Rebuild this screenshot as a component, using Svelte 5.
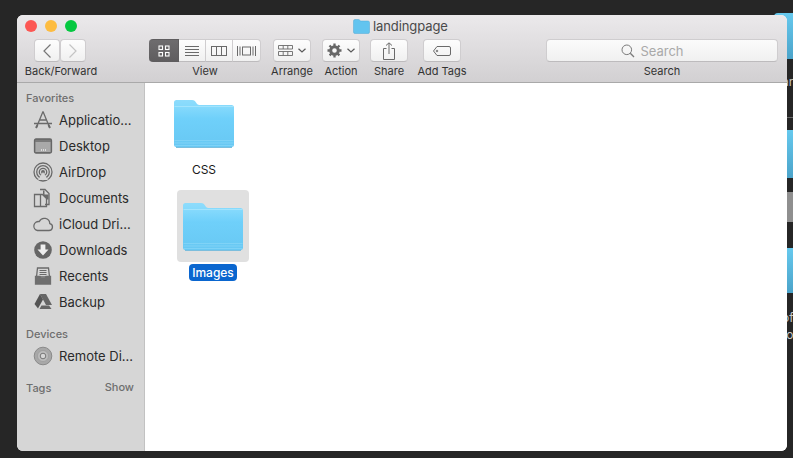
<script>
  const favorites = [
    { name: 'Applicatio...', icon: 'apps' },
    { name: 'Desktop', icon: 'desktop' },
    { name: 'AirDrop', icon: 'airdrop' },
    { name: 'Documents', icon: 'docs' },
    { name: 'iCloud Dri...', icon: 'cloud' },
    { name: 'Downloads', icon: 'down' },
    { name: 'Recents', icon: 'recents' },
    { name: 'Backup', icon: 'backup' }
  ];
</script>

{#snippet folder(id)}
  <svg class="folder" width="62" height="50" viewBox="0 0 62 50">
    <defs>
      <linearGradient id={id} x1="0" y1="0" x2="0" y2="1">
        <stop offset="0" stop-color="#8edcfc" />
        <stop offset="0.16" stop-color="#84d9fc" />
        <stop offset="0.4" stop-color="#6fd0fa" />
        <stop offset="1" stop-color="#68c8f3" />
      </linearGradient>
    </defs>
    <path d="M1 3.500a2.500 2.500 0 0 1 2.500-2.500h15.500c2.500 0 3 1 4 2.500s1.500 2.500 3.500 2.500h32a2.500 2.500 0 0 1 2.500 2.500v37a2.500 2.500 0 0 1-2.500 2.500h-55a2.500 2.500 0 0 1-2.500-2.500z" fill="url(#{id})" />
    <path d="M1.500 7.500h59" stroke="#a3e4fd" stroke-width="1" />
    <path d="M1.500 41.500h59M1.500 44h59M1.500 46.500h59" stroke="#85d6f8" stroke-width="0.800" />
    <path d="M3 48.500h56" stroke="#7cbedd" stroke-width="1" />
  </svg>
{/snippet}

{#snippet sideIcon(kind)}
  <svg class="sicon" width="22" height="22" viewBox="0 0 22 22" fill="none" stroke="#6a6a6a" stroke-width="1.300">
    {#if kind === 'apps'}
      <path d="M11 2.500 5 17M11 2.500 17 17M2 14.500h18M8 11h6" />
      <path d="M4 19l1.500-3M18 19l-1.500-3" stroke-width="2" />
    {:else if kind === 'desktop'}
      <rect x="2.500" y="4" width="17" height="14" rx="1.500" fill="#7a7a7a" stroke="#666" />
      <rect x="3.500" y="7" width="15" height="10" fill="#a9a9a9" stroke="none" />
      <path d="M9 15h5" stroke="#eee" stroke-dasharray="1 1" />
    {:else if kind === 'airdrop'}
      <circle cx="11" cy="11" r="9" />
      <circle cx="11" cy="11" r="6.300" />
      <circle cx="11" cy="11" r="3.700" />
      <circle cx="11" cy="11" r="1.300" fill="#6a6a6a" />
      <path d="M6 19l5-8 5 8z" fill="#d6d6d6" stroke="none" />
    {:else if kind === 'docs'}
      <path d="M8 2.500h5l4 4v11h-4" />
      <path d="M2.500 7.500h6v12h-6zM8.500 7.500h2l4 4v8h-6z" />
      <path d="M11 3.500h1.500v4h4v5h-1.500l-4-5z" fill="#6a6a6a" stroke="none" />
    {:else if kind === 'cloud'}
      <path d="M5.500 17.500h11.500a3.500 3.500 0 0 0 .8-6.900 5.500 5.500 0 0 0-10.500-2 4.500 4.500 0 0 0-1.800 8.900z" />
    {:else if kind === 'down'}
      <circle cx="11" cy="11" r="8.800" fill="#666" stroke="none" />
      <path d="M8.600 5.500h4.800v5h3.100L11 16.500 5.500 10.500h3.100z" fill="#eee" stroke="none" />
    {:else if kind === 'recents'}
      <path d="M5.500 3h11l1 9h-13z" fill="#d6d6d6" />
      <path d="M7.500 5.500h7M7.500 7.500h7M7.500 9.500h7" stroke-width="1" />
      <path d="M3.500 11.500h4.500l1 2h4l1-2h4.500v7.500h-15z" fill="#6f6f6f" stroke="#6f6f6f" />
    {:else if kind === 'backup'}
      <path d="M8 3h6l6 11h-6z" fill="#666" stroke="none" />
      <path d="M8 3l3 5.500L6 17.500l-3.500-4.500z" fill="#555" stroke="none" />
      <path d="M7.500 18h12l-2.500-3.500H9.500z" fill="#666" stroke="none" />
    {:else if kind === 'disc'}
      <circle cx="11" cy="11" r="8.800" fill="#a8a8a8" stroke="#8a8a8a" stroke-width="1" />
      <circle cx="11" cy="11" r="5.500" fill="#bcbcbc" stroke="#999" stroke-width="0.700" />
      <circle cx="11" cy="11" r="2.800" fill="#d6d6d6" stroke="#777" stroke-width="1" />
    {/if}
  </svg>
{/snippet}

<div class="desktop">
  <div class="bg-folder f1"></div>
  <div class="bg-text t1">ar</div>
  <div class="bg-line"></div>
  <div class="bg-folder f2"></div>
  <div class="bg-band"></div>
  <div class="bg-folder f3"></div>
  <div class="bg-text t2">of</div>
  <div class="bg-text t3">ro</div>

  <div class="window">
    <header class="toolbar">
      <div class="title">
        <svg width="17" height="15" viewBox="0 0 17 15">
          <path d="M0.500 2a1.500 1.500 0 0 1 1.500-1.500h3.500c1 0 1.500 1.500 2.500 1.500h7a1.500 1.500 0 0 1 1.500 1.500v9.500a1.500 1.500 0 0 1-1.500 1.500h-13a1.500 1.500 0 0 1-1.500-1.500z" fill="#62c4ef" stroke="#4ea9d6" stroke-width="0.500" />
        </svg>
        <span>landingpage</span>
      </div>
      <div class="lights">
        <span class="light red"></span>
        <span class="light yellow"></span>
        <span class="light green"></span>
      </div>
      <div class="tools">
        <div class="tool c-nav">
          <div class="seg nav">
            <button class="btn w26" aria-label="Back">
              <svg width="12" height="16" viewBox="0 0 12 16" fill="none" stroke="#777" stroke-width="1.200"><path d="M9.500 1.500 3 8l6.500 6.500" /></svg>
            </button>
            <button class="btn w26" aria-label="Forward">
              <svg width="12" height="16" viewBox="0 0 12 16" fill="none" stroke="#c4c4c4" stroke-width="1.200"><path d="M2.500 1.500 9 8l-6.500 6.500" /></svg>
            </button>
          </div>
          <span class="label">Back/Forward</span>
        </div>
        <div class="tool c-view">
          <div class="seg joined">
            <button class="btn vw active" aria-label="Icons">
              <svg width="12" height="12" viewBox="0 0 12 12" fill="none" stroke="#fff" stroke-width="1.100"><rect x="1" y="1" width="3.500" height="3.500" /><rect x="7.500" y="1" width="3.500" height="3.500" /><rect x="1" y="7.500" width="3.500" height="3.500" /><rect x="7.500" y="7.500" width="3.500" height="3.500" /></svg>
            </button>
            <button class="btn vw" aria-label="List">
              <svg width="16" height="12" viewBox="0 0 16 12" stroke="#6a6a6a" stroke-width="1"><path d="M1 1.500h14M1 4.500h14M1 7.500h14M1 10.500h14" /></svg>
            </button>
            <button class="btn vw" aria-label="Columns">
              <svg width="16" height="12" viewBox="0 0 16 12" fill="none" stroke="#6a6a6a" stroke-width="1"><rect x="0.500" y="1.500" width="15" height="9" /><path d="M5.500 1.500v9M10.500 1.500v9" /></svg>
            </button>
            <button class="btn vw" aria-label="Cover flow">
              <svg width="19" height="12" viewBox="0 0 19 12" fill="none" stroke="#6a6a6a" stroke-width="1"><rect x="5.500" y="2" width="8" height="8" /><path d="M0.500 1v10M3 1.500v9M16 1.500v9M18.500 1v10" /></svg>
            </button>
          </div>
          <span class="label">View</span>
        </div>
        <div class="tool c-arrange">
          <button class="btn w38" aria-label="Arrange">
            <svg width="15" height="11" viewBox="0 0 15 11" fill="none" stroke="#6a6a6a" stroke-width="0.900"><path d="M0.500 0.500h14v3.500h-14zM0.500 6.500h14v4h-14zM5.200 0.500v3.500M9.800 0.500v3.500M5.200 6.500v4M9.800 6.500v4" /></svg>
            <svg width="8" height="5" viewBox="0 0 8 5" fill="none" stroke="#5a5a5a" stroke-width="1.200"><path d="M0.500 0.700 4 4l3.500-3.300" /></svg>
          </button>
          <span class="label">Arrange</span>
        </div>
        <div class="tool c-action">
          <button class="btn w38" aria-label="Action">
            <svg width="15" height="15" viewBox="0 0 15 15"><circle cx="7.500" cy="7.500" r="3.800" fill="none" stroke="#666" stroke-width="3" /><path d="M7.500 0.500v14M0.500 7.500h14M2.500 2.500l10 10M12.500 2.500l-10 10" stroke="#666" stroke-width="2.300" stroke-dasharray="2.400 9.200" /></svg>
            <svg width="8" height="5" viewBox="0 0 8 5" fill="none" stroke="#5a5a5a" stroke-width="1.200"><path d="M0.500 0.700 4 4l3.500-3.300" /></svg>
          </button>
          <span class="label">Action</span>
        </div>
        <div class="tool c-share">
          <button class="btn w38" aria-label="Share">
            <svg width="12" height="18" viewBox="0 0 12 18" fill="none" stroke="#6a6a6a" stroke-width="1"><path d="M3.500 6.500h-3v11h11v-11h-3M6 12V1M3 3.500 6 .8l3 2.700" /></svg>
          </button>
          <span class="label">Share</span>
        </div>
        <div class="tool c-tags">
          <button class="btn w38" aria-label="Add Tags">
            <svg width="18" height="10" viewBox="0 0 18 10" fill="none" stroke="#6a6a6a" stroke-width="1"><path d="M4 .5h12a1.500 1.500 0 0 1 1.500 1.500v6a1.500 1.500 0 0 1-1.500 1.500H4L.5 5z" /><circle cx="4" cy="5" r="0.800" /></svg>
          </button>
          <span class="label">Add Tags</span>
        </div>
        <div class="tool c-search">
          <div class="search">
            <svg width="14" height="14" viewBox="0 0 14 14" fill="none" stroke="#7a7a7a" stroke-width="1"><circle cx="5.800" cy="5.800" r="4.800" /><path d="M9.300 9.300 13 13" stroke-width="1.300" /></svg>
            <span>Search</span>
          </div>
          <span class="label">Search</span>
        </div>
      </div>
    </header>

    <div class="main">
      <aside class="sidebar">
        <h4>Favorites</h4>
        <ul>
          {#each favorites as f}
            <li>{@render sideIcon(f.icon)}<span>{f.name}</span></li>
          {/each}
        </ul>
        <h4 class="devices">Devices</h4>
        <ul>
          <li>{@render sideIcon('disc')}<span>Remote Di...</span></li>
        </ul>
        <div class="tags"><h4>Tags</h4><span>Show</span></div>
      </aside>
      <section class="content">
        <div class="item css">
          <div class="thumb">{@render folder('fa')}</div>
          <span class="name">CSS</span>
        </div>
        <div class="item images">
          <div class="thumb selected">{@render folder('fb')}</div>
          <span class="name sel">Images</span>
        </div>
      </section>
    </div>
  </div>
</div>

<style>
  :global(body) {
    margin: 0;
    background: #262626;
  }
  .desktop {
    position: relative;
    width: 793px;
    height: 458px;
    overflow: hidden;
    background: #262626;
    font-family: Inter, "Liberation Sans", sans-serif;
    padding: 15px 6px 7px 17px;
    box-sizing: border-box;
  }
  .bg-folder {
    position: absolute;
    left: 774px;
    width: 30px;
    background: linear-gradient(#66c9ee, #4ba3c9);
    border-radius: 4px 0 0 2px;
  }
  .f1 { top: 13px; height: 46px; }
  .f2 { top: 130px; height: 48px; }
  .f3 { top: 248px; height: 45px; }
  .bg-text {
    position: absolute;
    left: 782px;
    color: #c9c9c9;
    font-size: 12px;
    line-height: 14px;
  }
  .t1 { top: 75px; }
  .t2 { top: 311px; }
  .t3 { top: 328px; }
  .bg-line {
    position: absolute;
    left: 787px;
    top: 117px;
    width: 6px;
    height: 1px;
    background: #666;
  }
  .bg-band {
    position: absolute;
    left: 787px;
    top: 192px;
    width: 6px;
    height: 30px;
    background: #8f8f8f;
  }
  .window {
    position: relative;
    height: 436px;
    border-radius: 6px;
    overflow: hidden;
    display: flex;
    flex-direction: column;
    background: #fff;
  }
  .toolbar {
    position: relative;
    height: 68px;
    box-sizing: border-box;
    flex: none;
    background: linear-gradient(#ebe9eb, #d2d0d2);
    border-bottom: 1px solid #a9a9a9;
    padding-top: 5px;
  }
  .title {
    position: absolute;
    left: 336px;
    top: 4px;
    display: flex;
    align-items: center;
    gap: 3px;
    color: #4a4a4a;
    font-size: 13px;
    line-height: 15px;
    letter-spacing: -0.1px;
  }
  .lights {
    display: flex;
    gap: 8px;
    padding-left: 8px;
    height: 12px;
  }
  .light {
    width: 12px;
    height: 12px;
    border-radius: 50%;
  }
  .red { background: #fc5753; }
  .yellow { background: #fdbc40; }
  .green { background: #05c840; }
  .tools {
    display: flex;
    margin-top: 7px;
    padding-left: 8px;
  }
  .tool {
    display: flex;
    flex-direction: column;
    align-items: center;
    flex: none;
  }
  .label {
    font-size: 11px;
    line-height: 13px;
    margin-top: 3px;
    color: #333;
    white-space: nowrap;
  }
  .c-nav { width: 72px; }
  .c-view { width: 112px; margin-left: 52px; }
  .c-arrange { width: 38px; margin-left: 12px; }
  .c-action { width: 38px; margin-left: 11px; }
  .c-share { width: 38px; margin-left: 10px; }
  .c-tags { width: 38px; margin-left: 15px; }
  .c-search { width: 232px; margin-left: 85px; }
  .seg { display: flex; gap: 0; }
  .nav { margin-right: 3px; }
  .btn {
    height: 23px;
    padding: 0;
    margin: 0;
    box-sizing: border-box;
    display: flex;
    align-items: center;
    justify-content: center;
    gap: 5px;
    background: linear-gradient(#fdfdfd, #f0f0f0);
    border: 1px solid #cfcdcf;
    border-bottom-color: #bdbbbd;
    border-radius: 4px;
  }
  .w26 { width: 26px; }
  .w38 { width: 38px; }
  .joined .vw {
    width: 27px;
    border-radius: 0;
    border-left: none;
  }
  .joined .vw:first-child {
    width: 30px;
    border-radius: 4px 0 0 4px;
  }
  .joined .vw:last-child {
    width: 28px;
    border-radius: 0 4px 4px 0;
  }
  .active {
    background: linear-gradient(#6e6c6e, #5f5d5f);
    border-color: #5f5d5f;
  }
  .search {
    width: 232px;
    height: 23px;
    box-sizing: border-box;
    display: flex;
    align-items: center;
    justify-content: center;
    gap: 5px;
    padding-right: 19px;
    background: linear-gradient(#fbfbfb, #f0f0f0);
    border: 1px solid #cfcdcf;
    border-bottom-color: #bdbbbd;
    border-radius: 4px;
    color: #a9a9a9;
    font-size: 13px;
  }
  .main {
    flex: 1;
    display: flex;
    min-height: 0;
  }
  .sidebar {
    width: 128px;
    box-sizing: border-box;
    flex: none;
    background: #d6d6d6;
    border-right: 1px solid #c2c2c2;
    padding: 9px 0 0 9px;
    color: #2a2a2a;
  }
  h4 {
    margin: 0;
    font-size: 11px;
    line-height: 13px;
    font-weight: 500;
    color: #6e6e6e;
  }
  ul {
    list-style: none;
    margin: 0;
    padding: 0;
  }
  .sidebar ul { margin-top: 2px; }
  li {
    height: 26px;
    display: flex;
    align-items: center;
    gap: 5px;
    padding-left: 6px;
    font-size: 13px;
    white-space: nowrap;
  }
  .sicon { flex: none; }
  .devices { margin-top: 13px; }
  .tags {
    display: flex;
    justify-content: space-between;
    align-items: baseline;
    margin-top: 12px;
    padding-right: 10px;
  }
  .tags span {
    font-size: 11px;
    font-weight: 500;
    color: #6e6e6e;
    position: relative;
    top: -1px;
  }
  .content {
    flex: 1;
    background: #fff;
    position: relative;
    padding-top: 16px;
  }
  .item {
    display: flex;
    flex-direction: column;
    align-items: center;
    width: 72px;
  }
  .css { margin-left: 23px; }
  .images { margin-left: 32px; margin-top: 12px; }
  .thumb {
    width: 72px;
    height: 72px;
    box-sizing: border-box;
    display: flex;
    justify-content: center;
    padding-top: 12px;
  }
  .css .thumb { padding-top: 0; height: 60px; }
  .selected {
    background: #e0e0e0;
    border-radius: 4px;
  }
  .folder { display: block; }
  .name {
    font-size: 12px;
    line-height: 17px;
    color: #1a1a1a;
    padding: 0 3px;
    margin-top: 2px;
  }
  .sel {
    background: #0a66cf;
    color: #fff;
    border-radius: 4px;
    font-weight: 500;
  }
</style>
